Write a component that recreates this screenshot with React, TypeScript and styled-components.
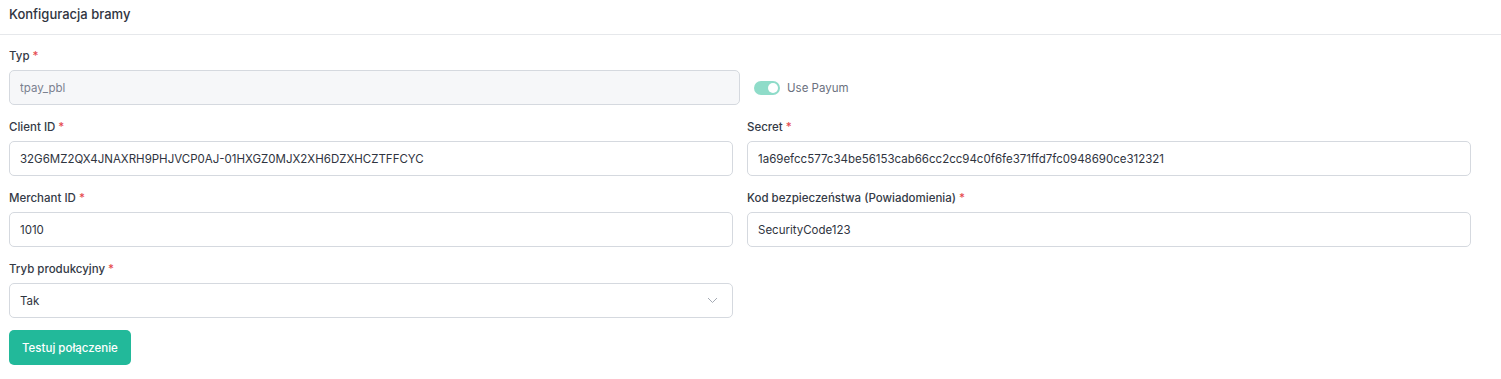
import React, { useState } from "react";
import styled, { createGlobalStyle } from "styled-components";

const GlobalStyle = createGlobalStyle`
  body {
    margin: 0;
    background: #ffffff;
    font-family: Inter, "Noto Sans", sans-serif;
    color: #343a46;
  }
`;

const Card = styled.div`
  width: 1501px;
  background: #ffffff;
`;

const CardHeader = styled.div`
  height: 35px;
  box-sizing: border-box;
  padding: 4px 9px 10px;
  border-bottom: 1px solid #e6e8eb;
  font-size: 13px;
  font-weight: 500;
  color: #2f3440;
  display: flex;
  align-items: center;
`;

const CardBody = styled.div`
  padding: 14px 30px 14px 9px;
  display: flex;
  flex-direction: column;
  gap: 15px;
`;

const Row = styled.div<{ $cols: string }>`
  display: grid;
  grid-template-columns: ${({ $cols }) => $cols};
  column-gap: 14px;
  align-items: end;
`;

const Field = styled.div`
  display: flex;
  flex-direction: column;
  gap: 7px;
`;

const Label = styled.label`
  font-size: 11.5px;
  font-weight: 500;
  color: #343a46;
  line-height: 14px;
`;

const Required = styled.span`
  color: #e5484d;
  margin-left: 3px;
`;

const Input = styled.input<{ $disabled?: boolean }>`
  box-sizing: border-box;
  height: 35px;
  width: 100%;
  padding: 0 10px;
  border: 1px solid #d5d9df;
  border-radius: 5px;
  font-family: Inter, "Noto Sans", sans-serif;
  font-size: 11.5px;
  color: ${({ $disabled }) => ($disabled ? "#7b8190" : "#2f3440")};
  background: ${({ $disabled }) => ($disabled ? "#f6f7f9" : "#ffffff")};
  outline: none;
`;

const SelectBox = styled.div`
  box-sizing: border-box;
  height: 35px;
  padding: 0 14px 0 10px;
  border: 1px solid #d5d9df;
  border-radius: 5px;
  display: flex;
  align-items: center;
  justify-content: space-between;
  font-size: 11.5px;
  color: #2f3440;
`;

const ToggleWrap = styled.label`
  display: flex;
  align-items: center;
  gap: 7px;
  height: 35px;
  font-size: 11.5px;
  color: #6b7180;
  cursor: pointer;
`;

const Track = styled.span<{ $on: boolean }>`
  position: relative;
  width: 26px;
  height: 14px;
  border-radius: 7px;
  background: ${({ $on }) => ($on ? "#8fdcc9" : "#d5d9df")};
`;

const Knob = styled.span<{ $on: boolean }>`
  position: absolute;
  top: 2px;
  left: ${({ $on }) => ($on ? "14px" : "2px")};
  width: 10px;
  height: 10px;
  border-radius: 50%;
  background: #ffffff;
`;

const Button = styled.button`
  align-self: flex-start;
  height: 35px;
  padding: 0 13px;
  border: none;
  border-radius: 5px;
  background: #22b99a;
  color: #ffffff;
  font-family: Inter, "Noto Sans", sans-serif;
  font-size: 11.5px;
  font-weight: 500;
  margin-top: -3px;
`;

const Chevron = () => (
  <svg width="11" height="7" viewBox="0 0 11 7" fill="none">
    <path d="M1 1l4.5 4.5L10 1" stroke="#a4aab4" strokeWidth="1" />
  </svg>
);

const App = () => {
  const [payum, setPayum] = useState(true);

  return (
    <Card>
      <GlobalStyle />
      <CardHeader>Konfiguracja bramy</CardHeader>
      <CardBody>
        <Row $cols="731px auto">
          <Field>
            <Label>
              Typ<Required>*</Required>
            </Label>
            <Input $disabled readOnly value="tpay_pbl" />
          </Field>
          <ToggleWrap onClick={() => setPayum(!payum)}>
            <Track $on={payum}>
              <Knob $on={payum} />
            </Track>
            Use Payum
          </ToggleWrap>
        </Row>
        <Row $cols="1fr 1fr">
          <Field>
            <Label>
              Client ID<Required>*</Required>
            </Label>
            <Input readOnly value="32G6MZ2QX4JNAXRH9PHJVCP0AJ-01HXGZ0MJX2XH6DZXHCZTFFCYC" />
          </Field>
          <Field>
            <Label>
              Secret<Required>*</Required>
            </Label>
            <Input readOnly value="1a69efcc577c34be56153cab66cc2cc94c0f6fe371ffd7fc0948690ce312321" />
          </Field>
        </Row>
        <Row $cols="1fr 1fr">
          <Field>
            <Label>
              Merchant ID<Required>*</Required>
            </Label>
            <Input readOnly value="1010" />
          </Field>
          <Field>
            <Label>
              Kod bezpieczeństwa (Powiadomienia)<Required>*</Required>
            </Label>
            <Input readOnly value="SecurityCode123" />
          </Field>
        </Row>
        <Row $cols="1fr 1fr">
          <Field>
            <Label>
              Tryb produkcyjny<Required>*</Required>
            </Label>
            <SelectBox>
              Tak
              <Chevron />
            </SelectBox>
          </Field>
        </Row>
        <Button>Testuj połączenie</Button>
      </CardBody>
    </Card>
  );
};

export default App;
